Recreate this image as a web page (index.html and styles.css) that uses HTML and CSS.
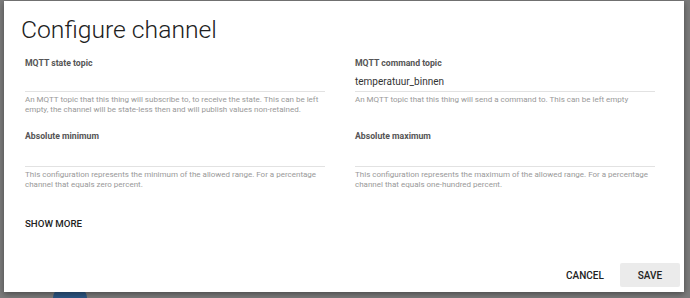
FILE: index.html
```html
<!DOCTYPE html>
<html lang="en">
  <head>
    <meta charset="UTF-8" />
    <meta name="viewport" content="width=device-width, initial-scale=1.0" />
    <title>Configure channel</title>
    <link rel="stylesheet" href="styles.css">
  </head>
  <body>
    <div class="backdrop-dot"></div>
    <div class="dialog">
      <h2 class="dialog-title">Configure channel</h2>
      <div class="fields">
        <div class="field">
          <label class="field-label">MQTT state topic</label>
          <div class="field-input"></div>
          <div class="field-help">An MQTT topic that this thing will subscribe to, to receive the state. This can be left empty, the channel will be state-less then and will publish values non-retained.</div>
        </div>
        <div class="field">
          <label class="field-label">MQTT command topic</label>
          <div class="field-input">temperatuur_binnen</div>
          <div class="field-help">An MQTT topic that this thing will send a command to. This can be left empty</div>
        </div>
        <div class="field">
          <label class="field-label">Absolute minimum</label>
          <div class="field-input field-input-tall"></div>
          <div class="field-help">This configuration represents the minimum of the allowed range. For a percentage channel that equals zero percent.</div>
        </div>
        <div class="field">
          <label class="field-label">Absolute maximum</label>
          <div class="field-input field-input-tall"></div>
          <div class="field-help">This configuration represents the maximum of the allowed range. For a percentage channel that equals one-hundred percent.</div>
        </div>
      </div>
      <button class="show-more">SHOW MORE</button>
      <div class="actions">
        <button class="btn">CANCEL</button>
        <button class="btn btn-save">SAVE</button>
      </div>
    </div>
  </body>
</html>
```

FILE: styles.css
```css
body {
  margin: 0;
  width: 690px;
  height: 298px;
  overflow: hidden;
  background: #7b7b7b;
  font-family: Roboto, "Liberation Sans", sans-serif;
  position: relative;
}
.backdrop-dot {
  position: absolute;
  left: 53px;
  top: 285px;
  width: 34px;
  height: 13px;
  border-radius: 17px 17px 0 0 / 13px 13px 0 0;
  background: #2c5784;
}
.dialog {
  position: relative;
  margin: 1px 0 0 4px;
  width: 680px;
  height: 291px;
  background: #fff;
  box-shadow: 0 2px 6px #0006;
  display: flex;
  flex-direction: column;
  box-sizing: border-box;
}
.dialog-title {
  margin: 14px 0 0 17px;
  font-size: 24.7px;
  line-height: 30px;
  font-weight: 300;
  color: #212121;
}
.fields {
  margin: 12px 0 0 21px;
  display: grid;
  grid-template-columns: 300px 300px;
  column-gap: 30px;
  row-gap: 15px;
}
.field-label {
  display: block;
  font-size: 8.7px;
  line-height: 12px;
  font-weight: 700;
  color: #555;
}
.field-input {
  height: 22px;
  line-height: 25px;
  font-size: 10px;
  color: #333;
  border-bottom: 1px solid #e2e2e2;
}
.field-input-tall {
  height: 24px;
}
.field-help {
  margin-top: 3px;
  margin-right: -4px;
  font-size: 8px;
  line-height: 10px;
  color: #999;
}
.show-more {
  align-self: flex-start;
  margin: 27px 0 0 21px;
  padding: 0;
  border: 0;
  background: none;
  font-family: inherit;
  font-size: 9.7px;
  font-weight: 500;
  line-height: 14px;
  color: #222;
}
.actions {
  margin-top: auto;
  padding: 0 4px 5px 0;
  display: flex;
  justify-content: flex-end;
  gap: 5px;
}
.btn {
  width: 60px;
  height: 24px;
  border: 0;
  border-radius: 2px;
  background: none;
  font-family: inherit;
  font-size: 10px;
  font-weight: 500;
  color: #222;
}
.btn-save {
  background: #ebebeb;
}
```
